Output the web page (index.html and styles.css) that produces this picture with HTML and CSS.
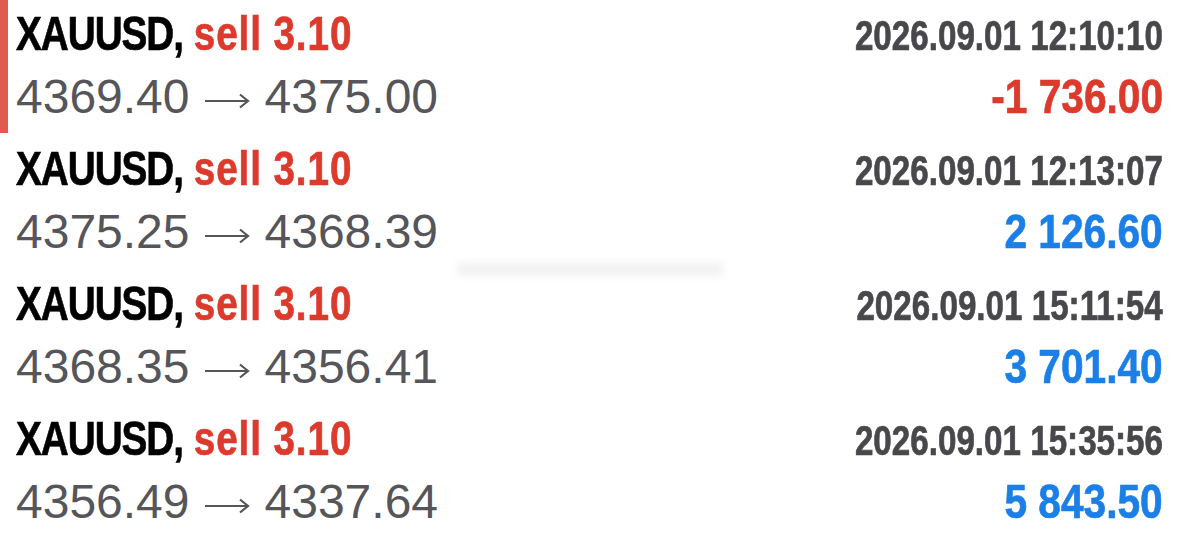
FILE: index.html
```html
<!DOCTYPE html>
<html lang="en">
  <head>
    <meta charset="UTF-8" />
    <meta name="viewport" content="width=device-width, initial-scale=1.0" />
    <title>Trade History</title>
    <link rel="stylesheet" href="styles.css">
  </head>
  <body>
    <div class="history">
      <div class="trade selected">
        <div class="line">
          <span class="symbol"><span class="pair">XAUUSD,</span> <span class="side">sell 3.10</span></span>
          <span class="time">2026.09.01 12:10:10</span>
        </div>
        <div class="line">
          <span class="prices">4369.40<span class="arrow"><svg width="46" height="18" viewBox="0 0 46 18"><path d="M1 9H44M36 2.5L44 9L36 15.5" fill="none" stroke="#55555a" stroke-width="2.2"/></svg></span>4375.00</span>
          <span class="profit loss">-1 736.00</span>
        </div>
      </div>

      <div class="trade">
        <div class="line">
          <span class="symbol"><span class="pair">XAUUSD,</span> <span class="side">sell 3.10</span></span>
          <span class="time">2026.09.01 12:13:07</span>
        </div>
        <div class="line">
          <span class="prices">4375.25<span class="arrow"><svg width="46" height="18" viewBox="0 0 46 18"><path d="M1 9H44M36 2.5L44 9L36 15.5" fill="none" stroke="#55555a" stroke-width="2.2"/></svg></span>4368.39</span>
          <span class="profit">2 126.60</span>
        </div>
        <div class="watermark"></div>
      </div>

      <div class="trade">
        <div class="line">
          <span class="symbol"><span class="pair">XAUUSD,</span> <span class="side">sell 3.10</span></span>
          <span class="time">2026.09.01 15:11:54</span>
        </div>
        <div class="line">
          <span class="prices">4368.35<span class="arrow"><svg width="46" height="18" viewBox="0 0 46 18"><path d="M1 9H44M36 2.5L44 9L36 15.5" fill="none" stroke="#55555a" stroke-width="2.2"/></svg></span>4356.41</span>
          <span class="profit">3 701.40</span>
        </div>
      </div>

      <div class="trade">
        <div class="line">
          <span class="symbol"><span class="pair">XAUUSD,</span> <span class="side">sell 3.10</span></span>
          <span class="time">2026.09.01 15:35:56</span>
        </div>
        <div class="line">
          <span class="prices">4356.49<span class="arrow"><svg width="46" height="18" viewBox="0 0 46 18"><path d="M1 9H44M36 2.5L44 9L36 15.5" fill="none" stroke="#55555a" stroke-width="2.2"/></svg></span>4337.64</span>
          <span class="profit">5 843.50</span>
        </div>
      </div>
    </div>
  </body>
</html>
```

FILE: styles.css
```css
body {
  margin: 0;
  background: #ffffff;
  font-family: "Liberation Sans", Arial, sans-serif;
  overflow: hidden;
}

.history {
  display: flex;
  flex-direction: column;
}

.trade {
  position: relative;
  height: 135px;
  padding: 2px 16px 0 16px;
  box-sizing: border-box;
}

.trade.selected {
  border-left: 8px solid #e05a4f;
  padding-left: 8px;
  height: 133px;
  margin-bottom: 2px;
}

.line {
  display: flex;
  justify-content: space-between;
  align-items: baseline;
  height: 63px;
  line-height: 63px;
}

/* no condensed face installed, so squeeze the bold text */
.symbol,
.time,
.profit {
  display: inline-block;
  font-weight: bold;
  white-space: nowrap;
  -webkit-text-stroke: 0.7px currentColor;
}

.symbol {
  font-size: 49px;
  color: #000000;
  transform: scaleX(0.79);
  transform-origin: left center;
}

.pair {
  letter-spacing: -1.3px;
}

.side {
  color: #dc3a2c;
  letter-spacing: 1.1px;
}

.time {
  font-size: 42px;
  color: #48484c;
  transform: scaleX(0.79);
  transform-origin: right center;
}

.prices {
  font-size: 48px;
  color: #55555a;
  white-space: nowrap;
}

.arrow {
  display: inline-block;
  width: 75px;
  padding-left: 14px;
  box-sizing: border-box;
}

.arrow svg {
  vertical-align: 3px;
}

.profit {
  font-size: 49px;
  color: #1a7fe6;
  transform: scaleX(0.83);
  transform-origin: right center;
}

.profit.loss {
  color: #dc3a2c;
}

/* faint smudge left over in the capture */
.watermark {
  position: absolute;
  left: 458px;
  top: 128px;
  width: 265px;
  height: 12px;
  background: #f0f0f0;
  filter: blur(4px);
}
```
